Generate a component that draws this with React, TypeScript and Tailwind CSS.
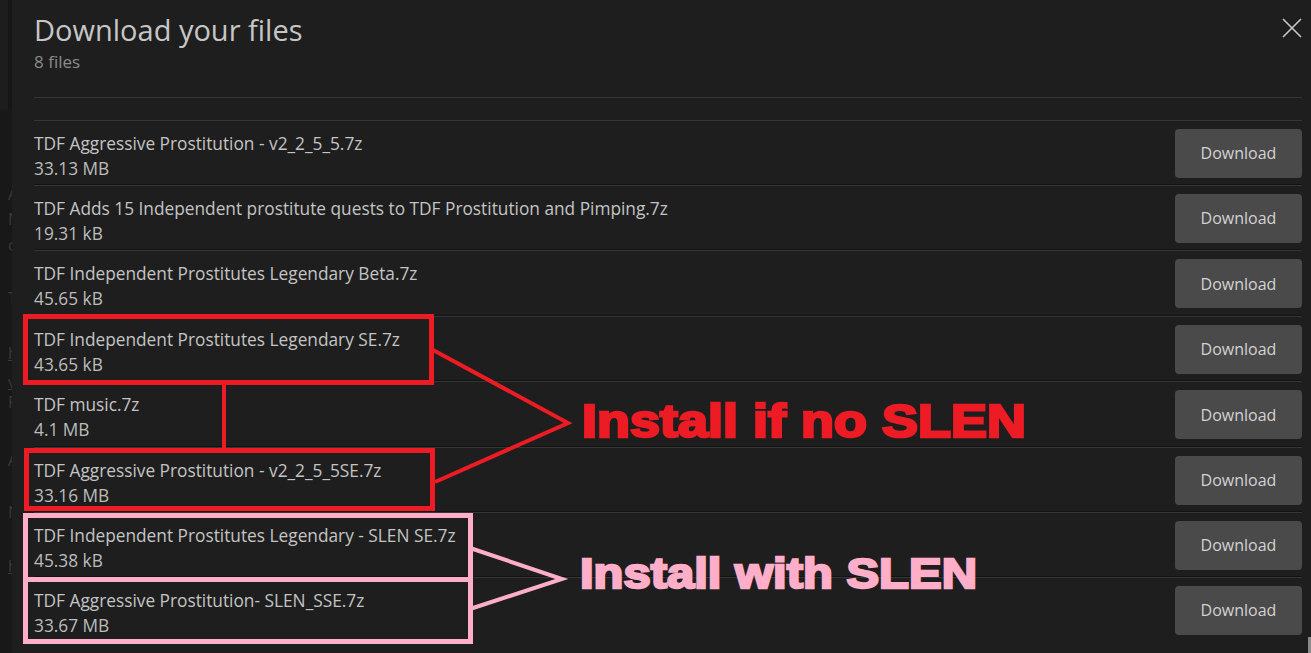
import React from "react";

type FileRow = { name: string; size: string; h: string };

const files: FileRow[] = [
  { name: "TDF Aggressive Prostitution - v2_2_5_5.7z", size: "33.13 MB", h: "h-[65px]" },
  { name: "TDF Adds 15 Independent prostitute quests to TDF Prostitution and Pimping.7z", size: "19.31 kB", h: "h-[65px]" },
  { name: "TDF Independent Prostitutes Legendary Beta.7z", size: "45.65 kB", h: "h-[66px]" },
  { name: "TDF Independent Prostitutes Legendary SE.7z", size: "43.65 kB", h: "h-[65px]" },
  { name: "TDF music.7z", size: "4.1 MB", h: "h-[66px]" },
  { name: "TDF Aggressive Prostitution - v2_2_5_5SE.7z", size: "33.16 MB", h: "h-[65px]" },
  { name: "TDF Independent Prostitutes Legendary - SLEN SE.7z", size: "45.38 kB", h: "h-[65px]" },
  { name: "TDF Aggressive Prostitution- SLEN_SSE.7z", size: "33.67 MB", h: "h-[65px]" },
];

// Letters of the page behind the dialog that peek out at the left edge
const ghost: { t: string; mt: string; u?: boolean }[] = [
  { t: "A", mt: "mt-[76px]" },
  { t: "N", mt: "mt-[9px]" },
  { t: "c", mt: "mt-[10px]" },
  { t: "T", mt: "mt-[37px]" },
  { t: "h", mt: "mt-[39px]", u: true },
  { t: "v", mt: "mt-[13px]", u: true },
  { t: "F", mt: "mt-[4px]" },
  { t: "A", mt: "mt-[42px]" },
  { t: "N", mt: "mt-[36px]" },
  { t: "h", mt: "mt-[38px]", u: true },
];

function CloseIcon() {
  return (
    <svg width="20" height="20" viewBox="0 0 20 20" className="block">
      <path d="M1 1 L19 19 M19 1 L1 19" stroke="#c9c9c9" strokeWidth="1.6" fill="none" />
    </svg>
  );
}

function Annotations() {
  const red = "#ed1c24";
  const pink = "#ffaec9";
  const font = "'Liberation Sans', Arial, sans-serif";
  return (
    <svg
      className="absolute left-0 top-0 pointer-events-none"
      width="1311"
      height="653"
      viewBox="0 0 1311 653"
    >
      {/* non-SLEN group */}
      <rect x="25.5" y="316.5" width="406" height="66" fill="none" stroke={red} strokeWidth="5" />
      <rect x="26.5" y="450.5" width="406" height="58" fill="none" stroke={red} strokeWidth="5" />
      <line x1="224" y1="385" x2="224" y2="448" stroke={red} strokeWidth="4" />
      <polyline points="433,350 568,423 435,482" fill="none" stroke={red} strokeWidth="4" />
      <text
        x="582"
        y="437"
        fill={red}
        stroke={red}
        strokeWidth="2.6"
        strokeLinejoin="miter"
        fontFamily={font}
        fontWeight="700"
        fontSize="46"
        textLength="444"
        lengthAdjust="spacingAndGlyphs"
      >
        Install if no SLEN
      </text>

      {/* SLEN group */}
      <rect x="25.5" y="515.5" width="445" height="64" fill="none" stroke={pink} strokeWidth="5" />
      <rect x="25.5" y="579.5" width="445" height="62" fill="none" stroke={pink} strokeWidth="5" />
      <polyline points="470,548 562,579 470,609" fill="none" stroke={pink} strokeWidth="4" />
      <text
        x="580"
        y="588"
        fill={pink}
        stroke={pink}
        strokeWidth="2.4"
        strokeLinejoin="miter"
        fontFamily={font}
        fontWeight="700"
        fontSize="43"
        textLength="397"
        lengthAdjust="spacingAndGlyphs"
      >
        Install with SLEN
      </text>
    </svg>
  );
}

export default function App() {
  return (
    <div
      className="relative w-[1311px] h-[653px] overflow-hidden flex bg-[#181818]"
      style={{ fontFamily: "'Open Sans', 'Noto Sans', sans-serif" }}
    >
      {/* dimmed page behind the dialog */}
      <div className="w-[12px] shrink-0 flex flex-col overflow-hidden">
        <div className="h-[110px] shrink-0 flex">
          <div className="w-[8px] bg-[#1d1d1d]" />
          <div className="w-[4px] bg-[#161616]" />
        </div>
        <div className="flex flex-col pl-[8px] text-[16px] leading-[16px] text-[#3a3a3a]">
          {ghost.map((g, i) => (
            <span key={i} className={`${g.mt} ${g.u ? "underline" : ""} whitespace-nowrap`}>
              {g.t}
            </span>
          ))}
        </div>
      </div>

      {/* dialog */}
      <div className="flex-1 bg-[#1e1e1e] pl-[22px] pr-[9px] flex flex-col">
        <div className="flex justify-between items-start">
          <div className="flex flex-col">
            <h1 className="pt-[13px] text-[29px] leading-[34px] font-normal text-[#c6c6c6]">
              Download your files
            </h1>
            <p className="mt-[5px] text-[17px] leading-[20px] text-[#8b8b8b]">8 files</p>
          </div>
          <div className="pt-[18px]">
            <CloseIcon />
          </div>
        </div>

        <div className="mt-[25px] border-t border-[#353535]" />

        <div className="mt-[22px] flex flex-col">
          {files.map((f, i) => (
            <div
              key={i}
              className={`${f.h} shrink-0 flex items-center justify-between border-t border-[#363636] ${
                i > 0 ? "shadow-[0_-1px_0_#131313]" : ""
              }`}
            >
              <div className="self-start mt-[10px] flex flex-col text-[17.3px] leading-[25px]">
                <span className="text-[#c4c4c4] whitespace-nowrap">{f.name}</span>
                <span className="text-[#bcbcbc]">{f.size}</span>
              </div>
              <button className="w-[127px] h-[49px] rounded-[4px] bg-[#4a4a4a] text-[16px] text-[#d2d2d2]">
                Download
              </button>
            </div>
          ))}
        </div>
      </div>

      {/* scrollbar thumb at the bottom right */}
      <div className="absolute right-0 bottom-0 w-[3px] h-[16px] bg-[#8a8a8a]" />

      <Annotations />
    </div>
  );
}
